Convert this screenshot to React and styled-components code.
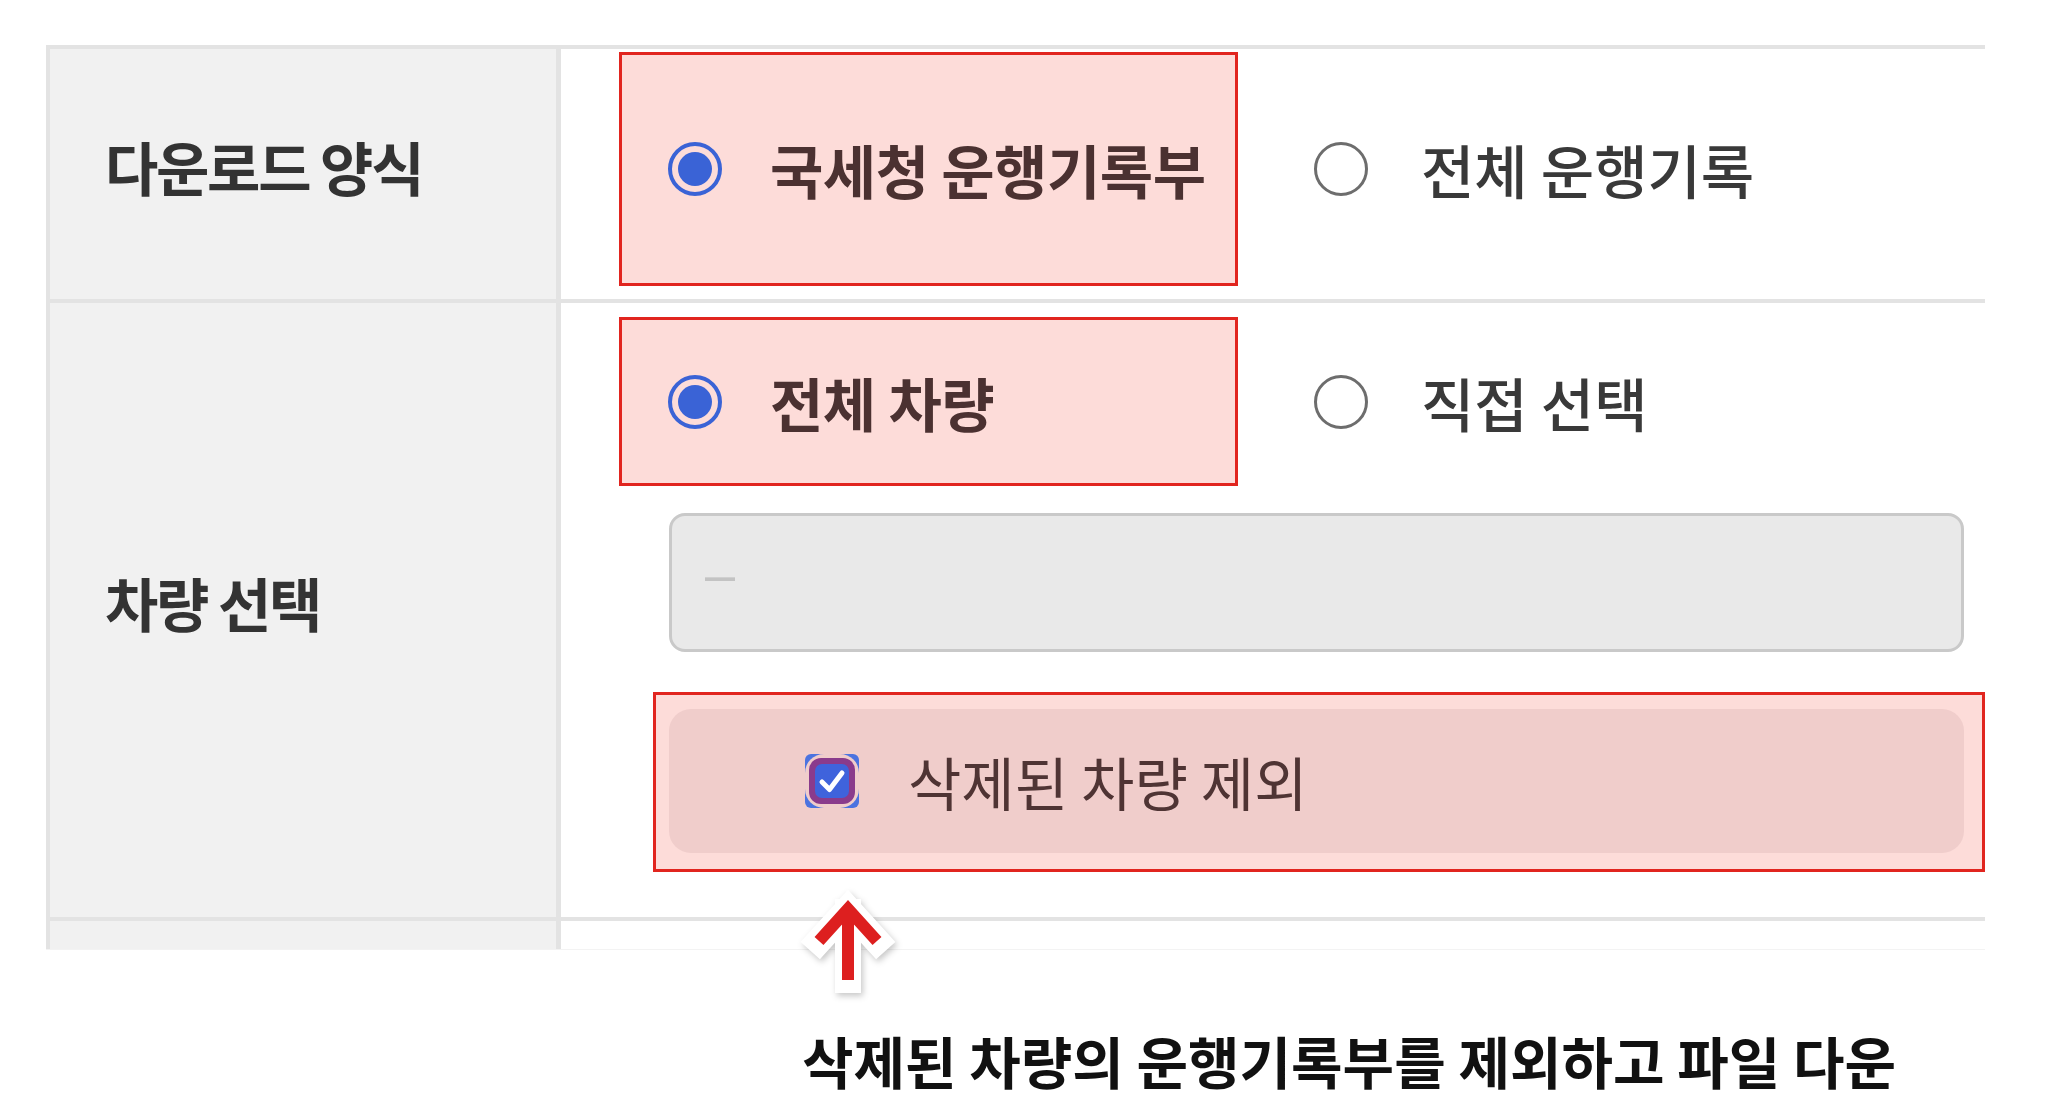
import React from "react";
import styled, { createGlobalStyle } from "styled-components";

const GlobalStyle = createGlobalStyle`
  html, body {
    margin: 0;
    padding: 0;
    background: #ffffff;
  }
  body {
    font-family: "Noto Sans CJK KR", "Noto Sans", sans-serif;
    color: #333333;
  }
  * {
    box-sizing: border-box;
  }
`;

const Page = styled.div`
  position: relative;
  width: 2048px;
  height: 1106px;
  padding: 45px 0 0 46px;
  overflow: hidden;
`;

const Table = styled.div`
  width: 1939px;
  border-top: 4px solid #e3e3e3;
`;

const Row = styled.div`
  display: grid;
  grid-template-columns: 515px 1fr;
  border-bottom: ${({ $last }) => ($last ? "1px solid #f3f3f3" : "4px solid #e3e3e3")};
  height: ${({ $height }) => ($height ? `${$height}px` : "auto")};
`;

const LabelCell = styled.div`
  display: flex;
  align-items: center;
  padding: 0 0 16px 55px;
  background: #f1f1f1;
  border-left: 4px solid #e3e3e3;
  border-right: 5px solid #e3e3e3;
  font-size: 58px;
  font-weight: 700;
  letter-spacing: -2.3px;
  color: #333333;
  white-space: nowrap;
`;

const ValueCell = styled.div`
  display: flex;
  flex-direction: column;
  align-items: flex-start;
  padding: ${({ $pad }) => $pad};
`;

const OptionRow = styled.div`
  display: flex;
  align-items: center;
`;

const Highlight = styled.div`
  display: flex;
  align-items: center;
  width: ${({ $width }) => $width}px;
  height: ${({ $height }) => $height}px;
  padding: ${({ $pad }) => $pad || "0 0 0 46px"};
  margin: ${({ $margin }) => $margin || "0"};
  background: #fddcd9;
  border: 3px solid #e1251f;
  color: #4b3131;
`;

const Option = styled.label`
  display: flex;
  align-items: center;
  gap: ${({ $gap }) => $gap || 48}px;
  margin-left: ${({ $offset }) => $offset || 0}px;
  font-size: 58px;
  font-weight: ${({ $checked }) => ($checked ? 700 : 500)};
  letter-spacing: ${({ $checked }) => ($checked ? "-0.5px" : "0")};
  color: ${({ $checked }) => ($checked ? "inherit" : "#393939")};
  white-space: nowrap;
`;

const RadioMark = styled.span`
  display: grid;
  place-items: center;
  flex-shrink: 0;
  width: 54px;
  height: 54px;
  border-radius: 50%;
  border: ${({ $checked }) => ($checked ? "4px solid #3a63d6" : "3px solid #6d6d6d")};

  &::after {
    content: "";
    display: ${({ $checked }) => ($checked ? "block" : "none")};
    width: 34px;
    height: 34px;
    border-radius: 50%;
    background: #3a63d6;
  }
`;

const SelectBox = styled.div`
  display: flex;
  align-items: center;
  width: 1295px;
  height: 139px;
  margin: 27px 0 0 50px;
  padding: 0 0 18px 33px;
  border: 3px solid #c9c9c9;
  border-radius: 16px;
  background: #e9e9e9;
`;

const Placeholder = styled.span`
  font-family: "Liberation Sans", Arial, sans-serif;
  font-size: 54px;
  color: #c3c3c3;
`;

const CheckRow = styled.div`
  display: flex;
  align-items: center;
  gap: 49px;
  width: 100%;
  height: 100%;
  padding-left: 136px;
  border-radius: 22px;
  background: #f0cdcb;
  font-size: 58px;
  font-weight: 400;
  color: #4f3434;
  white-space: nowrap;
`;

const Arrow = styled.svg`
  position: absolute;
  left: 790px;
  top: 886px;
  filter: drop-shadow(2px 3px 3px rgba(0, 0, 0, 0.22));
`;

const Caption = styled.p`
  margin: 77px 0 0 756px;
  font-size: 56px;
  font-weight: 600;
  line-height: 66px;
  color: #111111;
  white-space: nowrap;
`;

function Radio({ checked, label, offset, gap }) {
  return (
    <Option $checked={checked} $offset={offset} $gap={gap}>
      <RadioMark $checked={checked} />
      {label}
    </Option>
  );
}

function CheckMark() {
  return (
    <svg width="54" height="54" viewBox="0 0 54 54">
      <rect x="0" y="0" width="54" height="54" rx="6" fill="#4b73e0" />
      <rect x="0" y="0" width="54" height="54" rx="19" fill="#f0cdcb" />
      <rect x="4" y="4" width="46" height="46" rx="12" fill="#8a3b8c" />
      <rect x="10" y="10" width="34" height="34" rx="7" fill="#3f63dc" />
      <path d="M17 28 L24.5 35.5 L37 19" fill="none" stroke="#ffffff" strokeWidth="5" strokeLinecap="round" strokeLinejoin="round" />
    </svg>
  );
}

export default function App() {
  return (
    <Page>
      <GlobalStyle />
      <Table>
        <Row>
          <LabelCell>다운로드 양식</LabelCell>
          <ValueCell $pad="3px 0 13px 58px">
            <OptionRow>
              <Highlight $width={619} $height={234}>
                <Radio checked label="국세청 운행기록부" />
              </Highlight>
              <Radio label="전체 운행기록" offset={76} gap={53} />
            </OptionRow>
          </ValueCell>
        </Row>

        <Row>
          <LabelCell>차량 선택</LabelCell>
          <ValueCell $pad="14px 0 45px 58px">
            <OptionRow>
              <Highlight $width={619} $height={169}>
                <Radio checked label="전체 차량" />
              </Highlight>
              <Radio label="직접 선택" offset={76} gap={53} />
            </OptionRow>

            <SelectBox>
              <Placeholder>–</Placeholder>
            </SelectBox>

            <Highlight $width={1332} $height={180} $pad="14px 18px 16px 13px" $margin="40px 0 0 34px">
              <CheckRow>
                <CheckMark />
                삭제된 차량 제외
              </CheckRow>
            </Highlight>
          </ValueCell>
        </Row>

        <Row $height={29} $last>
          <LabelCell />
          <div />
        </Row>
      </Table>

      <Arrow width="112" height="112" viewBox="0 0 112 112">
        <path d="M29 55 L58 23 L87 55 M58 26 L58 94" fill="none" stroke="#ffffff" strokeWidth="26" strokeLinecap="square" strokeLinejoin="miter" />
        <path d="M29 55 L58 23 L87 55 M58 26 L58 94" fill="none" stroke="#dd1f1f" strokeWidth="12" strokeLinejoin="miter" />
      </Arrow>

      <Caption>삭제된 차량의 운행기록부를 제외하고 파일 다운</Caption>
    </Page>
  );
}
